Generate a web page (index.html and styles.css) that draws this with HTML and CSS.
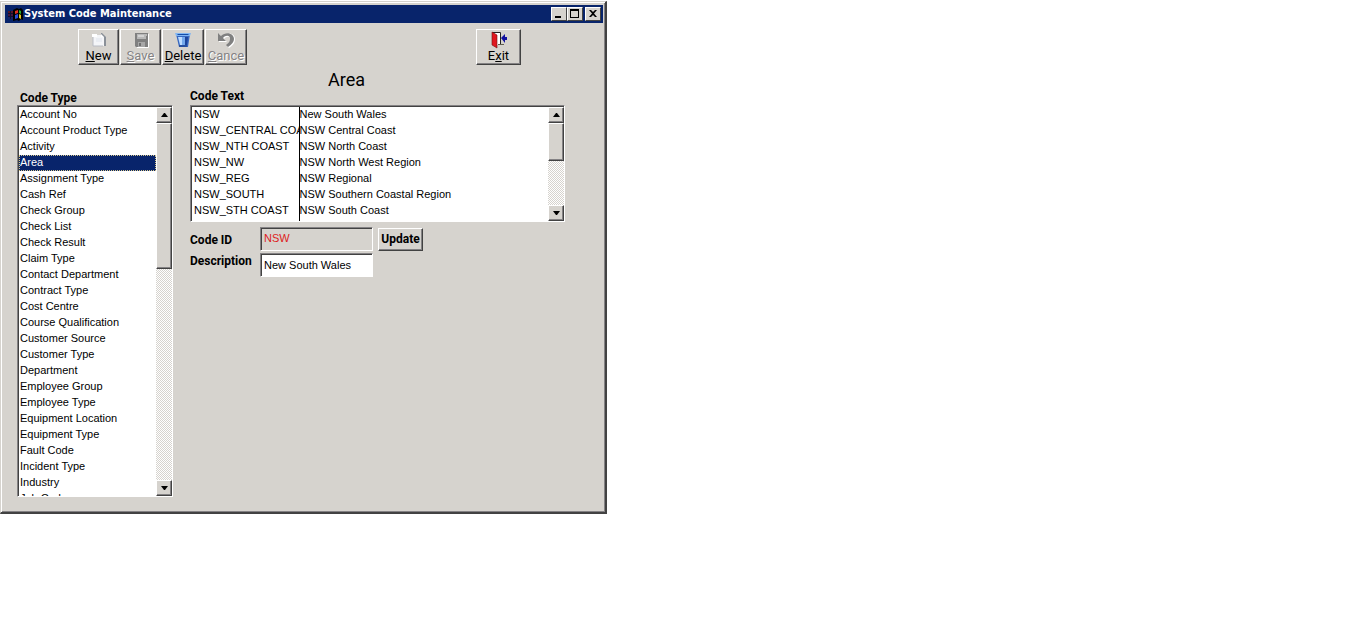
FILE: index.html
```html
<!DOCTYPE html>
<html lang="en">
<head>
<meta charset="utf-8">
<title>System Code Maintenance</title>
<link rel="stylesheet" href="styles.css">
</head>
<body>
<main class="window">
  <header class="titlebar">
    <svg class="app-icon" viewBox="0 0 16 16" aria-hidden="true">
      <path d="M1 5h6v8H1z" fill="#101030"/>
      <path d="M6 4l4-2 2 1 2-1 2 2v10l-2-1-2 2-2-1-4 1z" fill="#000"/>
      <path d="M1 6h2M4 6h2" stroke="#a02020"/><path d="M1 9h2M4 9h2" stroke="#7a2050"/><path d="M1 12h2M4 12h2" stroke="#2038a0"/>
      <path d="M8 5l3-1v3l-3 1z" fill="#e03020"/><path d="M12 4l2 1v3l-2-1z" fill="#20b030"/>
      <path d="M8 9l3-1v4l-3 1z" fill="#2850d8"/><path d="M12 8l2 1v4l-2-1z" fill="#e0c820"/>
    </svg>
    <h1 class="title">System Code Maintenance</h1>
    <div class="captions">
      <button class="caption" aria-label="Minimize"><svg viewBox="0 0 12 10"><path d="M2 7h6v2H2z"/></svg></button>
      <button class="caption" aria-label="Maximize"><svg viewBox="0 0 12 10"><path fill-rule="evenodd" d="M1 0h9v9H1zM2 2v6h7V2z"/></svg></button>
      <button class="caption close" aria-label="Close"><svg viewBox="0 0 12 10"><path d="M2 1h2l2 2 2-2h2L7 4.500l3 3.500H8L6 6 4 8H2l3-3.500z"/></svg></button>
    </div>
  </header>

  <nav class="toolbar" aria-label="Actions">
    <button class="tool">
      <svg viewBox="0 0 20 18"><path d="M4 4h11v11H4z" fill="#f4f5f8"/><path d="M4 5v10h10" fill="none" stroke="#b9bcc4"/><path d="M12 2h1l4 4v9h-2V6h-3z" fill="#8a9098"/><path d="M12 3l3 3h-3z" fill="#fff"/><path d="M3 3h5v3H3z" fill="#fff"/><path d="M7 8h6M7 10h6" stroke="#dfe4ed"/></svg>
      <span><u>N</u>ew</span>
    </button>
    <button class="tool" disabled>
      <svg viewBox="0 0 20 18"><path d="M4 2h13v14H5l-1-1z" fill="#808080"/><path d="M6 3h9v5H6z" fill="#b8b8b8"/><path d="M7 11h7v5H7z" fill="#a8a8a8"/><path d="M8 12h2v3H8z" fill="#707070"/><path d="M7 5h6M15 4h1" stroke="#eee"/><path d="M17.500 3v13.500H6" fill="none" stroke="#fff"/></svg>
      <span><u>S</u>ave</span>
    </button>
    <button class="tool wide">
      <svg viewBox="0 0 20 18"><path d="M3 3h14l-2 13H6z" fill="#3868c0"/><path d="M5 6h4v8H7z" fill="#bcdcff"/><path d="M9 6h3v8H9z" fill="#75a9ec"/><path d="M12 6h3l-1 8h-2z" fill="#1d459b"/><path d="M2 2h16l-1 3H3z" fill="#81b6f2"/><path d="M4 3h12l-1 1H5z" fill="#164da8"/><path d="M6 15h8" stroke="#183880"/></svg>
      <span><u>D</u>elete</span>
    </button>
    <button class="tool wide" disabled>
      <svg viewBox="0 0 20 18"><path d="M3 3v8h8L8 8c3-4 8-2 7 1 0 3-2 4-4 6l2 2c4-3 6-5 6-9 0-6-8-8-13-2z" fill="#fff"/><path d="M2 2v8h8L7 7c3-4 8-2 7 1 0 3-2 4-4 6l2 2c4-3 6-5 6-8 0-6-8-8-13-3z" fill="#808080"/></svg>
      <span><u>C</u>ance</span>
    </button>
    <button class="tool exit">
      <svg viewBox="0 0 20 18"><path d="M3.500 14V1.500h8V14" fill="#fff" stroke="#222"/><path d="M9 13h6v1H9z" fill="#605f50"/><path d="M3 1l5 3v13l-5-3z" fill="#e01820" stroke="#701010" stroke-width=".6"/><path d="M12 7l4-4v3h2v3h-2v3z" fill="#1010a0"/></svg>
      <span>E<u>x</u>it</span>
    </button>
  </nav>

  <div class="content">
    <section class="types">
      <h2 class="label" id="types-label">Code Type</h2>
      <div class="sunken listbox">
        <ul class="options" role="listbox" tabindex="0" aria-labelledby="types-label">
          <li role="option">Account No</li><li role="option">Account Product Type</li><li role="option">Activity</li>
          <li role="option" aria-selected="true" class="selected">Area</li>
          <li role="option">Assignment Type</li><li role="option">Cash Ref</li><li role="option">Check Group</li><li role="option">Check List</li><li role="option">Check Result</li><li role="option">Claim Type</li><li role="option">Contact Department</li><li role="option">Contract Type</li><li role="option">Cost Centre</li><li role="option">Course Qualification</li><li role="option">Customer Source</li><li role="option">Customer Type</li><li role="option">Department</li><li role="option">Employee Group</li><li role="option">Employee Type</li><li role="option">Equipment Location</li><li role="option">Equipment Type</li><li role="option">Fault Code</li><li role="option">Incident Type</li><li role="option">Industry</li><li role="option">Job Code</li>
        </ul>
        <div class="scrollbar">
          <button class="arrow" aria-label="Scroll up"><svg viewBox="0 0 7 4"><path d="M3 0h1l3 4H0z"/></svg></button>
          <div class="track"><div class="thumb types-thumb"></div></div>
          <button class="arrow" aria-label="Scroll down"><svg viewBox="0 0 7 4"><path d="M0 0h7L4 4H3z"/></svg></button>
        </div>
      </div>
    </section>

    <section class="codes">
      <h2 class="area-title">Area</h2>
      <h3 class="label" id="codes-label">Code Text</h3>
      <div class="sunken codebox">
        <div class="rows">
          <table class="grid" aria-labelledby="codes-label">
            <tbody>
              <tr><td>NSW</td><td>New South Wales</td></tr>
              <tr><td>NSW_CENTRAL COAST</td><td>NSW Central Coast</td></tr>
              <tr><td>NSW_NTH COAST</td><td>NSW North Coast</td></tr>
              <tr><td>NSW_NW</td><td>NSW North West Region</td></tr>
              <tr><td>NSW_REG</td><td>NSW Regional</td></tr>
              <tr><td>NSW_SOUTH</td><td>NSW Southern Coastal Region</td></tr>
              <tr><td>NSW_STH COAST</td><td>NSW South Coast</td></tr>
            </tbody>
          </table>
        </div>
        <div class="scrollbar">
          <button class="arrow" aria-label="Scroll up"><svg viewBox="0 0 7 4"><path d="M3 0h1l3 4H0z"/></svg></button>
          <div class="track"><div class="thumb codes-thumb"></div></div>
          <button class="arrow" aria-label="Scroll down"><svg viewBox="0 0 7 4"><path d="M0 0h7L4 4H3z"/></svg></button>
        </div>
      </div>
      <form class="form">
        <label class="label" for="code-id">Code ID</label>
        <input class="sunken field readonly" id="code-id" value="NSW" readonly>
        <button class="update" type="button">Update</button>
        <label class="label top" for="description">Description</label>
        <input class="sunken field" id="description" value="New South Wales">
      </form>
    </section>
  </div>
</main>
</body>
</html>
```
FILE: styles.css
```css
* { box-sizing: border-box; }
body {
  margin: 0;
  padding-top: 1px;
  background: #fff;
  color: #000;
  font: 11px/16px "Liberation Sans", Arial, sans-serif;
}
h1, h2, h3, ul { margin: 0; padding: 0; }
button, input { margin: 0; font: inherit; color: inherit; border-radius: 0; }
svg { display: block; }

.window {
  width: 100%;
  max-width: 607px;
  padding: 3px 2px 15px 3px;
  background: #d6d3ce;
  border: 1px solid #d6d3ce;
  border-right: 2px solid #424242;
  border-bottom: 2px solid #424242;
  box-shadow: inset 1px 1px #fff, inset -1px -1px #848284;
}

.titlebar {
  display: flex;
  align-items: center;
  gap: 1px;
  height: 18px;
  margin-left: 1px;
  padding: 0 2px;
  background: #08246b;
  color: #fff;
}
.app-icon { width: 16px; height: 16px; }
.title { flex: 1; font: bold 11px/16px "DejaVu Sans Condensed", "DejaVu Sans", sans-serif; }
.captions { display: flex; }
.caption {
  width: 16px;
  height: 14px;
  padding: 1px;
  background: #d6d3ce;
  border: 1px solid;
  border-color: #fff #424242 #424242 #fff;
}
.caption svg { width: 12px; height: 10px; }
.close { margin-left: 2px; }

.toolbar { display: flex; gap: 1px; padding: 6px 82px 0 74px; }
.tool {
  display: flex;
  flex-direction: column;
  align-items: center;
  width: 41px;
  height: 36px;
  padding: 1px 0 0;
  background: #d6d3ce;
  border: 1px solid;
  border-color: #fff #424242 #424242 #fff;
  box-shadow: inset -1px -1px #848284;
  font: 13px/14px Roboto, sans-serif;
}
.tool svg { flex: none; width: 20px; height: 18px; }
.tool u { text-underline-offset: 1px; }
.tool:disabled { color: #848284; text-shadow: 1px 1px #fff; }
.wide { width: 42px; }
.exit { width: 45px; margin-left: auto; }

.content {
  display: grid;
  grid-template-columns: 156px minmax(0, 1fr);
  gap: 17px;
  padding: 4px 38px 0 13px;
}
.label { font: bold 12px/14px Roboto, sans-serif; }
.types { padding-top: 22px; }
.types .label { padding-left: 3px; }
.codes { padding-top: 1px; }
.area-title {
  height: 19px;
  padding-left: 138px;
  font: 18px/20px Roboto, sans-serif;
}

.sunken {
  background: #fff;
  border: 1px solid;
  border-color: #848284 #fff #fff #848284;
  box-shadow: inset 1px 1px #424242;
}
.listbox, .codebox { display: flex; padding: 1px 0 0 1px; }
.listbox { height: 392px; }
.codebox { height: 117px; margin-top: 2px; }
.options {
  flex: 1;
  overflow: hidden;
  list-style: none;
  outline: 0;
}
.options li { height: 16px; padding-left: 1px; line-height: 15px; white-space: nowrap; }
.options .selected { background: #08246b; color: #fff; outline: 1px dotted #d6c78c; outline-offset: -1px; }

.rows { flex: 1; overflow: hidden; }
.grid { width: 100%; border-collapse: collapse; table-layout: fixed; }
.grid td { height: 16px; padding: 0; overflow: hidden; line-height: 15px; white-space: nowrap; vertical-align: top; }
.grid td:first-child { width: 107px; padding-left: 2px; border-right: 1px solid #000; }
.grid tr:last-child td { height: 18px; }

.scrollbar { display: flex; flex-direction: column; width: 16px; }
.arrow {
  display: grid;
  place-items: center;
  flex: none;
  height: 16px;
  padding: 0;
  background: #d6d3ce;
  border: 1px solid;
  border-color: #fff #424242 #424242 #fff;
  box-shadow: inset -1px -1px #848284;
}
.arrow svg { width: 7px; height: 4px; }
.track {
  flex: 1;
  background: repeating-conic-gradient(#d6d3ce 0 25%, #fff 0 50%) 0 0 / 2px 2px;
}
.thumb {
  background: #d6d3ce;
  border: 1px solid;
  border-color: #fff #424242 #424242 #fff;
  box-shadow: inset -1px -1px #848284;
}
.types-thumb { height: 41%; }
.codes-thumb { height: 46%; }

.form {
  display: grid;
  grid-template-columns: 70px 113px 45px;
  row-gap: 2px;
  align-items: center;
  padding-top: 5px;
}
.form .label { padding-top: 1px; }
.form .top { align-self: start; }
.field { width: 113px; height: 24px; padding: 0 3px; outline: 0; }
.readonly { background: #d6d3ce; color: #de1c21; padding-bottom: 2px; }
.update {
  height: 23px;
  margin-left: 5px;
  margin-right: -5px;
  padding: 0;
  background: #d6d3ce;
  border: 1px solid;
  border-color: #fff #424242 #424242 #fff;
  box-shadow: inset -1px -1px #848284;
  font: bold 12px/14px Roboto, sans-serif;
}
```
